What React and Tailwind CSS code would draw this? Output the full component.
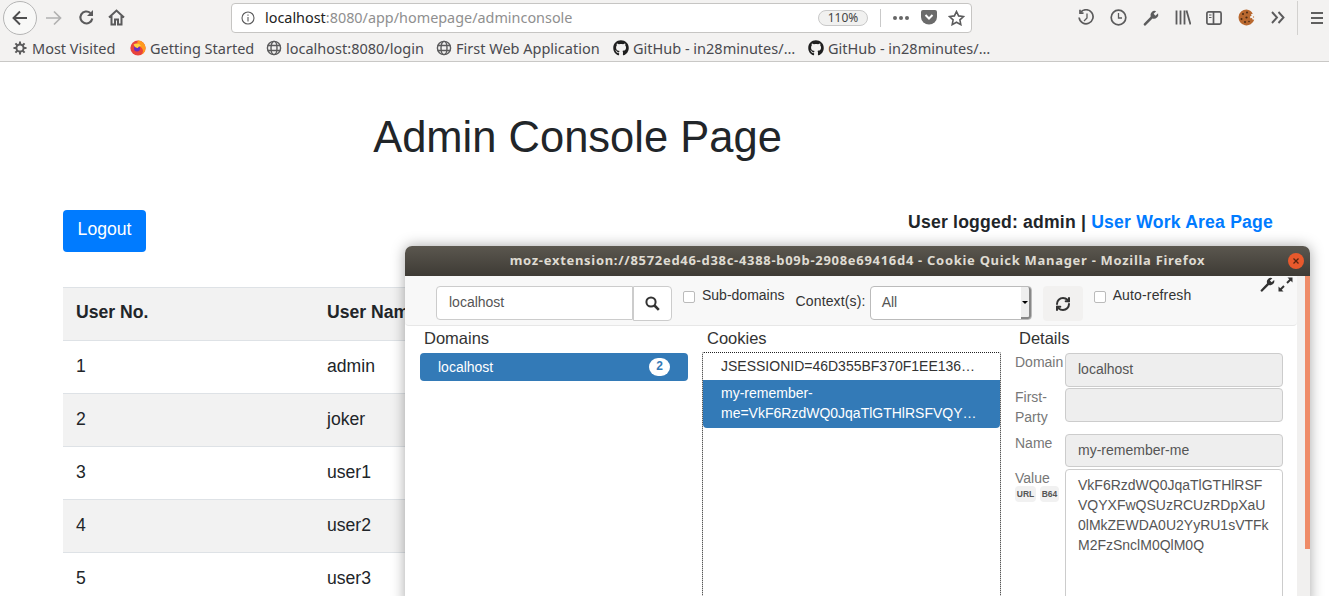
import React from "react";
import { RefreshCw } from "lucide-react";
import { FaGithub } from "react-icons/fa";

const G = "#5b5b5c";
function WrenchIcon({ size = 16, color = G, className = "" }) {
  return (
    <svg width={size} height={size} viewBox="0 0 16 16" className={className}>
      <path d="M.8 13.800 7.600 6.700A4.300 4.300 0 0 1 13.200 1.200L10.600 3.700l1.800 2 2.700-2.500a4.300 4.300 0 0 1-5.600 5.300L2.500 15.400a1.200 1.200 0 0 1-1.700-1.600z" fill={color} />
    </svg>
  );
}
function ExpandIcon() {
  return (
    <svg width="15" height="15" viewBox="0 0 15 15" fill="#333" stroke="#333">
      <path d="M9 6 13 2" strokeWidth="2" />
      <path d="M9.500.5h5v5z" stroke="none" />
      <path d="M6 9 2 13" strokeWidth="2" />
      <path d="M.5 9.500v5h5z" stroke="none" />
    </svg>
  );
}
function SearchIcon() {
  return (
    <svg width="15" height="15" viewBox="0 0 15 15" fill="none" stroke="#333">
      <circle cx="6" cy="6" r="4.600" strokeWidth="2" />
      <path d="m9.500 9.500 4.300 4.300" strokeWidth="2.600" />
    </svg>
  );
}
function Globe() {
  return (
    <svg width="16" height="16" viewBox="0 0 16 16" fill="none" stroke={G} strokeWidth="1.400" className="shrink-0">
      <circle cx="8" cy="8" r="6.600" />
      <ellipse cx="8" cy="8" rx="3" ry="6.600" />
      <path d="M1.600 5.500h12.800M1.600 10.500h12.800" />
    </svg>
  );
}
function Gear() {
  return (
    <svg width="14" height="14" viewBox="0 0 14 14" className="shrink-0 mr-[1px]">
      <circle cx="7" cy="7" r="3.600" fill="none" stroke={G} strokeWidth="2" />
      <path d="M7 .5v2.600M7 10.900v2.600M.5 7h2.600M10.900 7h2.600M2.400 2.400l1.900 1.900M9.700 9.700l1.900 1.900M11.600 2.400 9.700 4.300M4.300 9.700l-1.900 1.900" stroke={G} strokeWidth="2" />
    </svg>
  );
}
function Fox() {
  return (
    <svg width="16" height="16" viewBox="0 0 16 16" className="shrink-0">
      <circle cx="8" cy="8" r="7.600" fill="#e8433c" />
      <path d="M8 .4A7.600 7.600 0 0 1 15.600 8c0 3-2 5.800-4.700 7 1.700-1.400 2.500-3.400 1.900-5.300C12 7.500 10 6 8 6 7 4 7 2 8 .4z" fill="#ff9b1f" />
      <circle cx="7" cy="8.500" r="3" fill="#6a2ec0" />
      <path d="M3.500 4.500c2-1.500 5.500-1.500 7.500 1.500-2 0-3 1-3 2-2 0-3.500-1-4.500-3.500z" fill="#ffd23d" />
    </svg>
  );
}
function Bookmark({ icon, children, className = "" }) {
  return (
    <div className={`flex items-center gap-[4px] whitespace-nowrap shrink-0 ${className}`}>
      {icon}
      <span>{children}</span>
    </div>
  );
}
function Cookie() {
  return (
    <svg width="17" height="17" viewBox="0 0 17 17">
      <path d="M8.500.5a8 8 0 1 0 7.700 10.300l-1.700-.3-.5-1.500-1.600.2-.4-1.700 1.600-.8-.6-1.400 1.800-.5A8 8 0 0 0 8.500.5z" fill="#b8682f" />
      <g fill="#4a2a14">
        <circle cx="5" cy="5" r="1" /><circle cx="9" cy="3.500" r="1" /><circle cx="3.500" cy="10" r="1" />
        <circle cx="8.500" cy="8.500" r="1.100" /><circle cx="7" cy="13" r="1" /><circle cx="11" cy="12.500" r=".8" />
      </g>
      <circle cx="15.500" cy="8" r=".7" fill="#c87a3c" />
    </svg>
  );
}

function Toolbar() {
  const s = { stroke: G, strokeWidth: 1.700, fill: "none" };
  return (
    <div className="h-[62px] bg-[#f3f2f1] border-b border-[#c9c8c6] shrink-0 flex flex-col font-['Noto_Sans','Open_Sans',sans-serif]">
      <div className="h-[35px] flex items-center relative shrink-0">
        <div className="ml-[3px] w-[34px] h-[34px] rounded-full border border-[#b5b5b5] bg-[#f8f8f7] flex items-center justify-center">
          <svg width="18" height="18" viewBox="0 0 18 18" fill="none" stroke="#4f4f50" strokeWidth="1.900"><path d="M16 9H2.500M9 2.500 2.500 9 9 15.500" /></svg>
        </div>
        <svg width="18" height="18" viewBox="0 0 18 18" fill="none" stroke="#b1b1b1" strokeWidth="1.700" className="ml-[8px]"><path d="M1 9h14.500M9 2.500 15.500 9 9 15.500" /></svg>
        <svg width="17" height="17" viewBox="0 0 17 17" fill="none" stroke={G} strokeWidth="2.100" className="ml-[15px]"><path d="M14.300 9.500a6 6 0 1 1-1.900-5.500" /><path d="M15 1v6H9z" fill={G} stroke="none" /></svg>
        <svg width="17" height="17" viewBox="0 0 17 17" fill="none" stroke={G} strokeWidth="2" className="ml-[13px]"><path d="M1 8.500 8.500 1.500l7.500 7M3.500 7v8.500h3.500v-5h3v5h3.500V7" /></svg>
        <div className="ml-[106px] w-[741px] h-[30px] bg-white border border-[#c6c5c3] rounded-[4px] flex items-center text-[14.400px]">
          <svg width="14" height="14" viewBox="0 0 14 14" fill="none" stroke={G} strokeWidth="1.100" className="ml-[9px]"><circle cx="7" cy="7" r="6" /><path d="M7 6v4.500M7 3.500v1.200" /></svg>
          <span className="ml-[10px] text-[#222]">localhost<span className="text-[#8f8f8f]">:8080/app/homepage/adminconsole</span></span>
          <div className="ml-auto w-[50px] h-[16px] border border-[#c9c9c9] bg-[#f1f1f0] rounded-full text-[12px] leading-[14px] text-center text-[#444]">110%</div>
          <div className="ml-[12px] w-px h-[18px] bg-[#c9c9c9]" />
          <div className="ml-[12px] flex gap-[2px]">
            <span className="w-[4px] h-[4px] rounded-full bg-[#666]" /><span className="w-[4px] h-[4px] rounded-full bg-[#666]" /><span className="w-[4px] h-[4px] rounded-full bg-[#666]" />
          </div>
          <svg width="16" height="15" viewBox="0 0 16 15" className="ml-[12px]"><path d="M2 0h12a2 2 0 0 1 2 2v5a8 7.500 0 0 1-16 0V2a2 2 0 0 1 2-2z" fill="#6b6b6b" /><path d="M4.500 5 8 8.500 11.500 5" fill="none" stroke="#fff" strokeWidth="2" /></svg>
          <svg width="17" height="16" viewBox="0 0 17 16" fill="none" stroke={G} strokeWidth="1.600" className="ml-[11px] mr-[6px]"><path d="m8.500 1.500 2.100 4.400 4.900.6-3.600 3.300.9 4.800-4.300-2.400-4.300 2.400.9-4.800L1.500 6.500l4.900-.6z" /></svg>
        </div>
        <div className="ml-auto flex items-center">
          <svg width="17" height="17" viewBox="0 0 17 17" {...s}><path d="M2.500 3.500a7 7 0 1 1-1.400 5" /><path d="M2 .8v3.400h3.500" /><path d="M9 4.500v4.500L6 12" strokeWidth="1.300" /></svg>
          <svg width="17" height="17" viewBox="0 0 17 17" {...s} className="ml-[15px]"><circle cx="8.500" cy="8.500" r="7.300" /><path d="M8.500 4v5h3.500" strokeWidth="1.300" /></svg>
          <WrenchIcon size={16} className="ml-[16px]" />
          <svg width="16" height="15" viewBox="0 0 16 15" stroke={G} strokeWidth="1.800" fill="none" className="ml-[16px]"><path d="M1.500.5v14M5.500.5v14M9.500.5v14M11.500.5l4 14" /></svg>
          <svg width="16" height="14" viewBox="0 0 16 14" {...s} className="ml-[15px]"><rect x=".9" y=".9" width="14.200" height="12.200" rx="1.500" /><path d="M7.500.9v12.200" /><path d="M3 4h2.500M3 6.500h2.500" strokeWidth="1.200" /></svg>
          <div className="ml-[16px] w-[17px] h-[17px]"><Cookie /></div>
          <svg width="14" height="13" viewBox="0 0 14 13" fill="none" stroke={G} strokeWidth="1.900" className="ml-[16px]"><path d="m1 1 5 5.500-5 5.500M7.500 1l5 5.500-5 5.500" /></svg>
          <div className="ml-[12px] w-px h-[34px] bg-[#d2d1cf]" />
          <div className="ml-[13px] mr-[6px] w-[12px] flex flex-col gap-[3px]">
            <span className="h-[2px] bg-[#5f5f5f]" /><span className="h-[2px] bg-[#5f5f5f]" /><span className="h-[2px] bg-[#5f5f5f]" />
          </div>
        </div>
      </div>
      <div className="h-[27px] flex items-center text-[#4a4a4f] text-[14.500px] leading-[25px] pl-[13px]">
        <Bookmark icon={<Gear />} className="w-[117px]">Most Visited</Bookmark>
        <Bookmark icon={<Fox />} className="w-[136px]">Getting Started</Bookmark>
        <Bookmark icon={<Globe />} className="w-[170px]">localhost:8080/login</Bookmark>
        <Bookmark icon={<Globe />} className="w-[177px]">First Web Application</Bookmark>
        <Bookmark icon={<FaGithub size={16} color="#1f1f1f" />} className="w-[195px]">GitHub - in28minutes/…</Bookmark>
        <Bookmark icon={<FaGithub size={16} color="#1f1f1f" />}>GitHub - in28minutes/…</Bookmark>
      </div>
    </div>
  );
}

function Page() {
  const rows = [["1", "admin"], ["2", "joker"], ["3", "user1"], ["4", "user2"], ["5", "user3"]];
  return (
    <div className="px-[63px] font-['Liberation_Sans',Arial,sans-serif] text-[#212529]">
      <h1 className="text-[43.500px] leading-[53px] text-center pt-[49px] pr-[174px]">Admin Console Page</h1>
      <div className="flex justify-between items-start mt-[46px]">
        <button className="bg-[#007bff] text-white text-[17.600px] leading-[26px] h-[42px] w-[83px] rounded-[4px] pb-[4px]">Logout</button>
        <div className="text-[17.600px] leading-[26px] font-bold mr-[-7px] mt-[-1px] tracking-[0.2px]">User logged: admin | <span className="text-[#007bff]">User Work Area Page</span></div>
      </div>
      <table className="w-[1203px] mt-[35px] text-[17.600px] border-collapse">
        <thead>
          <tr className="bg-[#f2f2f2] h-[53px] border-t border-[#dee2e6]">
            <th className="text-left font-bold pl-[13px] pb-[4px] w-[251px]">User No.</th>
            <th className="text-left font-bold pl-[13px] pb-[4px]">User Name</th>
          </tr>
        </thead>
        <tbody>
          {rows.map(([n, u], i) => (
            <tr key={n} className={`h-[53px] border-t border-[#dee2e6] ${i % 2 ? "bg-[#f2f2f2]" : "bg-white"}`}>
              <td className="pl-[13px] pb-[2px]">{n}</td>
              <td className="pl-[13px] pb-[2px]">{u}</td>
            </tr>
          ))}
        </tbody>
      </table>
    </div>
  );
}

function Field({ label, value, h, children }) {
  return (
    <div className="flex">
      <div className="w-[50px] text-[14px] leading-[20px] text-[#777] shrink-0 -mt-[1px]">{label}</div>
      {children || <div className={`w-[218px] bg-[#eeeeee] border border-[#ccc] rounded-[4px] text-[14px] leading-[20px] text-[#555] px-[12px] pt-[5px] ${h}`}>{value}</div>}
    </div>
  );
}

function Dialog() {
  return (
    <div className="absolute left-[405px] top-[246px] w-[905px] h-[360px] rounded-t-[7px] shadow-[0_0_14px_rgba(0,0,0,0.35)] bg-white overflow-hidden font-['Liberation_Sans',Arial,sans-serif] text-[#333]">
      <div className="h-[30px] bg-gradient-to-b from-[#5b574f] to-[#3e3b35] flex items-center justify-center relative">
        <span className="font-['Noto_Sans','Open_Sans',sans-serif] font-bold text-[13px] tracking-[0.7px] text-[#dfdbd2]">moz-extension://8572ed46-d38c-4388-b09b-2908e69416d4 - Cookie Quick Manager - Mozilla Firefox</span>
        <div className="absolute right-[6px] top-[7px] w-[16px] h-[16px] rounded-full bg-[#e9592c] flex items-center justify-center">
          <svg width="8" height="8" viewBox="0 0 8 8" stroke="#5a2410" strokeWidth="1.300"><path d="m1.500 1.500 5 5M6.500 1.500l-5 5" /></svg>
        </div>
      </div>
      <div className="flex h-[330px]">
        <div className="w-[892px] shrink-0 flex flex-col">
          <div className="h-[50px] shrink-0 bg-[#f8f8f8] border-b border-[#e7e7e7] rounded-b-[4px] relative flex items-start text-[14px]">
            <div className="ml-[31px] mt-[10px] flex">
              <div className="w-[197px] h-[34px] bg-white border border-[#ccc] rounded-l-[4px] text-[#555] leading-[20px] px-[12px] py-[5px]">localhost</div>
              <div className="w-[39px] h-[35px] bg-white border border-l border-[#ccc] rounded-r-[4px] flex items-center justify-center">
                <SearchIcon />
              </div>
            </div>
            <div className="ml-[11px] mt-[15px] w-[12px] h-[12px] border border-[#bbb] rounded-[2px] bg-white" />
            <div className="ml-[7px] mt-[9px] leading-[20px]">Sub-domains</div>
            <div className="ml-[11px] mt-[15px] leading-[20px] tracking-[0.15px]">Context(s):</div>
            <div className="ml-[4px] mt-[10px] w-[162px] h-[34px] bg-white border border-[#bbb] rounded-[4px] relative leading-[20px] text-[#555] px-[11px] py-[5px]">
              All
              <div className="absolute right-0 top-0 bottom-0 w-[10px] bg-[#eeeeee] border-r-2 border-b-2 border-[#888] rounded-r-[3px] flex items-center justify-center">
                <div className="w-0 h-0 border-l-[3px] border-r-[3px] border-t-[3px] border-l-transparent border-r-transparent border-t-black" />
              </div>
            </div>
            <div className="ml-[11px] mt-[10px] w-[40px] h-[35px] bg-[#f2f1f0] rounded-[4px] flex items-center justify-center">
              <RefreshCw size={16} color="#333" strokeWidth={3} />
            </div>
            <div className="ml-[11px] mt-[15px] w-[12px] h-[12px] border border-[#bbb] rounded-[2px] bg-white" />
            <div className="ml-[7px] mt-[9px] leading-[20px] tracking-[0.15px]">Auto-refresh</div>
            <div className="absolute right-[4px] top-[1px] flex gap-[3px]">
              <WrenchIcon size={15} color="#333" />
              <ExpandIcon />
            </div>
          </div>
          <div className="flex flex-1 min-h-0">
            <div className="w-[297px] shrink-0 pl-[15px] pr-[7px]">
              <div className="text-[16.500px] leading-[22px] pl-[4px] pt-[1px]">Domains</div>
              <div className="mt-[4px] h-[28px] w-[268px] bg-[#337ab7] rounded-[4px] text-white text-[14px] leading-[26px] pl-[18px] pr-[18px] pb-[1px] flex justify-between items-center">
                <span>localhost</span>
                <span className="bg-white text-[#337ab7] text-[12px] font-bold rounded-full w-[21px] h-[18px] leading-[16px] text-center">2</span>
              </div>
            </div>
            <div className="w-[313px] shrink-0">
              <div className="text-[16.500px] leading-[22px] pl-[5px] pt-[1px]">Cookies</div>
              <div className="mt-[3px] w-[299px] h-[300px] border border-dotted border-[#222] rounded-t-[2px] text-[14px] leading-[20px]">
                <div className="h-[27px] px-[18px] pt-[3px] truncate">JSESSIONID=46D355BF370F1EE136B2F0C4E8A7</div>
                <div className="h-[48px] bg-[#337ab7] rounded-b-[4px] text-white px-[18px] pt-[3px]">
                  <div>my-remember-</div>
                  <div className="truncate">me=VkF6RzdWQ0JqaTlGTHlRSFVQYXFwQSUzRCUzRDpXaU0</div>
                </div>
              </div>
            </div>
            <div className="flex-1 min-w-0">
              <div className="text-[16.500px] leading-[22px] pt-[1px] pl-[4px]">Details</div>
              <div className="flex flex-col">
                <div className="mt-[4px]"><Field label="Domain" value="localhost" h="h-[34px]" /></div>
                <div className="mt-[1px]"><Field label="First-Party" value="" h="h-[34px]" /></div>
                <div className="mt-[7px]"><Field label="Name" value="my-remember-me" h="h-[33px]" /></div>
                <div className="mt-[2px]">
                  <Field label={<div><div>Value</div><div className="flex gap-[4px] -mt-[2px]"><span className="text-[8.500px] leading-[16px] w-[21px] text-center font-bold bg-[#f1f1f1] text-[#555] rounded-[4px]">URL</span><span className="text-[8.500px] leading-[16px] w-[19px] text-center font-bold bg-[#f1f1f1] text-[#555] rounded-[4px]">B64</span></div></div>}>
                    <div className="w-[218px] h-[140px] bg-white border border-[#ccc] rounded-[4px] text-[14px] leading-[20px] text-[#555] px-[12px] pt-[5px] break-all">VkF6RzdWQ0JqaTlGTHlRSFVQYXFwQSUzRCUzRDpXaU0lMkZEWDA0U2YyRU1sVTFkM2FzSnclM0QlM0Q</div>
                  </Field>
                </div>
              </div>
            </div>
          </div>
        </div>
        <div className="w-[13px] bg-[#f1f0ef] shrink-0 flex flex-col">
          <div className="w-[5px] h-[273px] bg-[#ef8c68] ml-[8px]" />
        </div>
      </div>
    </div>
  );
}

export default function App() {
  return (
    <div className="w-[1329px] h-[596px] overflow-hidden relative bg-white flex flex-col">
      <Toolbar />
      <Page />
      <Dialog />
    </div>
  );
}
